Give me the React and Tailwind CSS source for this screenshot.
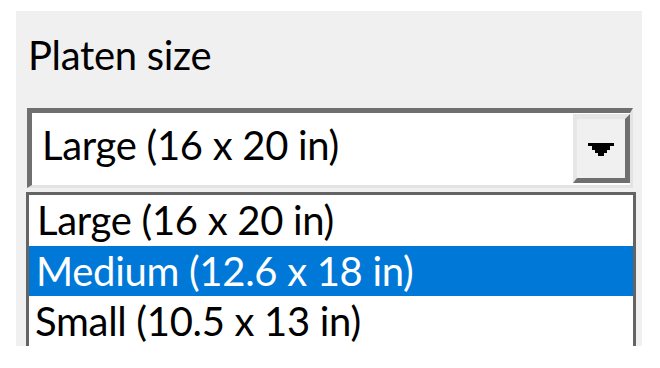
export default function App() {
  const font = { fontFamily: "Lato, 'Noto Sans', sans-serif" };
  return (
    <div className="w-[660px] h-[368px] bg-white overflow-hidden tracking-[-0.3px]" style={font}>
      <div className="ml-[16px] pt-0 mt-[11px] w-[626px] h-[335px] bg-[#f0f0f0] overflow-hidden flex flex-col">
        <div className="pt-[24px] pl-[12px] text-[40px] leading-[40px] text-black whitespace-nowrap">
          Platen size
        </div>
        <div className="mt-[33px] ml-[11px] w-[606px] h-[80px] flex border-t-[5px] border-l-[5px] border-t-[#6f6f6f] border-l-[#6f6f6f] border-r-[3px] border-b-[3px] border-r-[#e3e3e3] border-b-[#e3e3e3] bg-white">
          <div className="flex-1 pl-[10px] text-[40px] leading-[65px] text-black whitespace-nowrap">
            Large (16 x 20 in)
          </div>
          <div className="w-[57px] h-[69px] mt-[1px] bg-[#f0f0f0] border-t-[5px] border-l-[4px] border-t-[#e6e6e6] border-l-[#e6e6e6] border-r-[5px] border-b-[5px] border-r-[#6f6f6f] border-b-[#6f6f6f] flex items-center justify-center">
            <svg width="26" height="13" viewBox="0 0 26 13" className="mt-[2px]">
              <path d="M0 0H26V3H22V7H19V10H16V13H10V10H7V7H4V3H0Z" fill="#000" />
            </svg>
          </div>
        </div>
        <div className="mt-[4px] ml-[10px] w-[610px] flex-1 border-t-[3px] border-l-[3px] border-r-[3px] border-[#646464] bg-white text-[40px] whitespace-nowrap">
          <div className="h-[51px] leading-[50px] pl-[8px] text-black">Large (16 x 20 in)</div>
          <div className="h-[50px] leading-[50px] pl-[7px] bg-[#0078d7] text-white">Medium (12.6 x 18 in)</div>
          <div className="h-[50px] leading-[50px] pl-[6px] text-black">Small (10.5 x 13 in)</div>
        </div>
      </div>
    </div>
  );
}
